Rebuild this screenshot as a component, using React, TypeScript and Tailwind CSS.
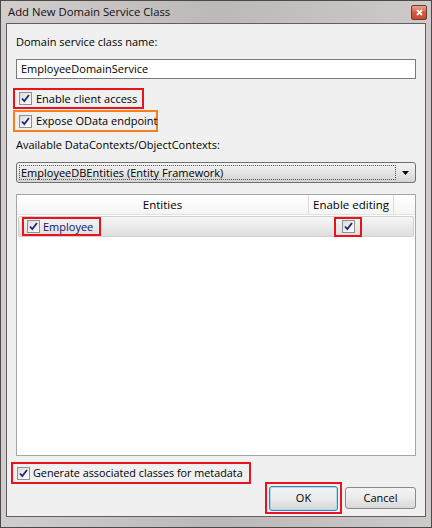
import React from "react";

const font = { fontFamily: '"Open Sans", "Noto Sans", sans-serif' };

function Check({ className = "" }: { className?: string }) {
  return (
    <span
      className={`inline-flex h-[13px] w-[13px] shrink-0 items-center justify-center border border-[#8e8f8f] bg-gradient-to-br from-[#dcdcdc] to-[#ffffff] ${className}`}
    >
      <svg width="9" height="9" viewBox="0 0 9 9">
        <path d="M1 4.5 L3.3 7 L8 1" fill="none" stroke="#1b2a78" strokeWidth="1.8" />
      </svg>
    </span>
  );
}

export default function App() {
  return (
    <div
      className="flex h-[528px] w-[432px] flex-col overflow-hidden border border-[#4a4a4a] bg-gradient-to-r from-[#d2cece] via-[#bdb8b8] to-[#cecaca] text-[11px] text-black"
      style={font}
    >
      {/* title bar */}
      <div className="flex h-[22px] shrink-0 items-start justify-between pl-[7px] pr-[4px] pt-[2px]">
        <span className="text-[11.3px] leading-[18px] text-[#101010]">Add New Domain Service Class</span>
        <span className="mt-[2px] flex h-[15px] w-[16px] items-center justify-center rounded-[2px] border border-[#6b3a33] bg-gradient-to-b from-[#e9a593] via-[#d35a3f] to-[#c9492e]">
          <svg width="7" height="7" viewBox="0 0 7 7">
            <path d="M1 1 L6 6 M6 1 L1 6" stroke="#ffffff" strokeWidth="1.8" />
          </svg>
        </span>
      </div>

      {/* client area */}
      <div className="mx-[5px] flex flex-1 flex-col border border-[#5f5f5f] bg-[#f0f0f0] px-[9px]">
        <div className="mt-[10px] leading-[16px]">Domain service class name:</div>
        <div className="mt-[9px] flex h-[20px] items-center border border-[#7a7a7a] bg-white px-[4px] leading-[16px]">
          EmployeeDomainService
        </div>

        <div className="mt-[9px] flex h-[21px] w-[131px] -ml-[3px] items-center gap-[4px] border-2 border-[#e8141c] pl-[4px]">
          <Check />
          <span className="whitespace-nowrap leading-[16px]">Enable client access</span>
        </div>
        <div className="mt-[1px] flex h-[22px] w-[145px] -ml-[3px] items-center gap-[4px] border-2 border-[#f4801f] pl-[4px]">
          <Check />
          <span className="whitespace-nowrap leading-[16px]">Expose OData endpoint</span>
        </div>

        <div className="mt-[5px] leading-[16px]">Available DataContexts/ObjectContexts:</div>
        <div className="mt-[9px] flex h-[21px] items-center rounded-[3px] border border-[#707070] bg-gradient-to-b from-[#f3f3f3] via-[#e6e6e6] to-[#d4d4d4] pl-[2px] pr-[6px]">
          <div className="flex h-[15px] flex-1 items-center border border-dotted border-[#555] pl-[1px] leading-[14px]">
            EmployeeDBEntities (Entity Framework)
          </div>
          <svg className="ml-[6px]" width="7" height="4" viewBox="0 0 7 4">
            <path d="M0 0 H7 L3.5 4 Z" fill="#000" />
          </svg>
        </div>

        {/* list */}
        <div className="mt-[11px] flex h-[262px] flex-col border border-[#a5a5a5] bg-white">
          <div className="flex h-[20px] shrink-0 border-b border-[#e2e2e2] bg-gradient-to-b from-[#ffffff] to-[#f5f5f5] text-[11.5px] leading-[16px]">
            <div className="flex w-[292px] items-center justify-center border-r border-[#dcdcdc]">Entities</div>
            <div className="flex w-[85px] items-center justify-center border-r border-[#dcdcdc]">Enable editing</div>
            <div className="flex-1" />
          </div>
          <div className="mx-[1px] mt-[1px] flex h-[21px] items-center rounded-[2px] border border-[#d0d0d0] bg-gradient-to-b from-[#f6f6f6] to-[#dedede]">
            <div className="ml-[3px] flex h-[19px] w-[79px] items-center gap-[3px] border-2 border-[#e8141c] pl-[3px]">
              <Check />
              <span className="leading-[16px] text-[#14146e]">Employee</span>
            </div>
            <div className="ml-[233px] flex h-[20px] w-[28px] items-center justify-center border-2 border-[#e8141c]">
              <Check />
            </div>
          </div>
        </div>

        <div className="mt-[6px] -ml-[5px] flex h-[22px] w-[240px] items-center gap-[3px] border-2 border-[#e8141c] pl-[4px]">
          <Check />
          <span className="whitespace-nowrap text-[10.8px] leading-[16px]">Generate associated classes for metadata</span>
        </div>

        <div className="flex justify-end">
          <div className="-mt-[2px] flex h-[32px] w-[77px] items-center justify-center border-2 border-[#e8141c]">
            <div className="flex h-[25px] w-[69px] items-center justify-center rounded-[3px] border border-[#3c7fb1] bg-gradient-to-b from-[#f2f2f2] via-[#ebebeb] to-[#d6d6d6] shadow-[inset_0_0_0_1px_#a6dcf5]">
              OK
            </div>
          </div>
          <div className="ml-[3px] mt-[3px] flex h-[22px] w-[71px] items-center justify-center rounded-[3px] border border-[#8a8a8a] bg-gradient-to-b from-[#f3f3f3] via-[#ebebeb] to-[#d8d8d8]">
            Cancel
          </div>
        </div>
      </div>
      <div className="h-[10px] shrink-0" />
    </div>
  );
}
